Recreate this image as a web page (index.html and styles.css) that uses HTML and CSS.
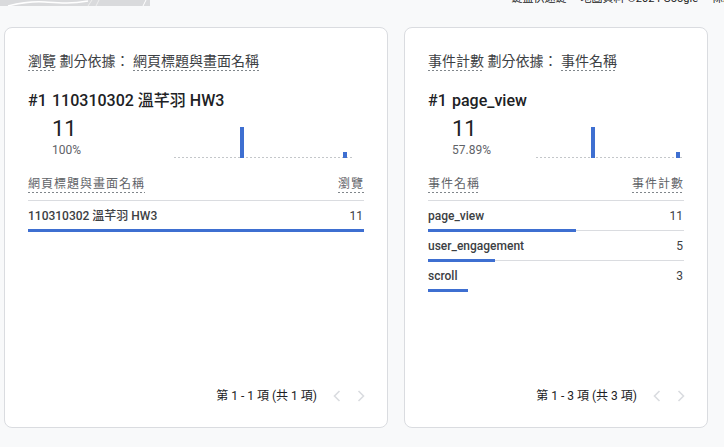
FILE: index.html
```html
<!DOCTYPE html>
<html lang="zh-Hant">
<head>
<meta charset="utf-8">
<title>報表</title>
<link rel="stylesheet" href="styles.css">
</head>
<body>
<div class="topbar">
  <div class="map">
    <svg width="150" height="6" viewBox="0 0 150 6" aria-hidden="true">
      <path d="M8 6 C20 3 30 1 45 2 S70 4 88 1" stroke="#fff" stroke-width="1.4" fill="none"/>
      <path d="M88 6 L92 0" stroke="#eee" stroke-width="1" fill="none"/>
      <path d="M96 6 L99 0" stroke="#eee" stroke-width="1" fill="none"/>
      <path d="M143 6 L146 0" stroke="#fff" stroke-width="1" fill="none"/>
    </svg>
  </div>
  <div class="attrib"><span>鍵盤快速鍵</span><span>地圖資料 ©2024 Google</span><span>條款</span></div>
</div>
<main class="cards">
  <section class="card card--wide">
    <div class="title"><span class="dash">瀏覽</span> 劃分依據： <span class="dash">網頁標題與畫面名稱</span></div>
    <div class="top"><span class="rank">#1</span><span>110310302 溫芊羽 HW3</span></div>
    <div class="metric-row">
      <div class="metric">
        <div class="value">11</div>
        <div class="pct">100%</div>
      </div>
      <div class="chart chart--wide">
        <div class="bar bar--tall"></div>
        <div class="bar bar--short"></div>
      </div>
    </div>
    <div class="thead"><span class="dash">網頁標題與畫面名稱</span><span class="dash">瀏覽</span></div>
    <div class="row row--last">
      <div class="row-main"><span class="name">110310302 溫芊羽 HW3</span><span class="num">11</span></div>
      <div class="track"><div class="fill" style="width:100%"></div></div>
    </div>
    <div class="pager">
      <span>第 1 - 1 項 (共 1 項)</span>
      <svg class="chev" width="8" height="12" viewBox="0 0 8 12"><path d="M6.5 1 L1.5 6 L6.5 11" fill="none" stroke="#dadce0" stroke-width="1.6"/></svg>
      <svg class="chev" width="8" height="12" viewBox="0 0 8 12"><path d="M1.5 1 L6.5 6 L1.5 11" fill="none" stroke="#dadce0" stroke-width="1.6"/></svg>
    </div>
  </section>
  <section class="card card--narrow">
    <div class="title"><span class="dash">事件計數</span> 劃分依據： <span class="dash">事件名稱</span></div>
    <div class="top"><span class="rank">#1</span><span>page_view</span></div>
    <div class="metric-row">
      <div class="metric">
        <div class="value">11</div>
        <div class="pct">57.89%</div>
      </div>
      <div class="chart chart--narrow">
        <div class="bar bar--tall"></div>
        <div class="bar bar--short"></div>
      </div>
    </div>
    <div class="thead"><span class="dash">事件名稱</span><span class="dash">事件計數</span></div>
    <div class="row">
      <div class="row-main"><span class="name">page_view</span><span class="num">11</span></div>
      <div class="track"><div class="fill" style="width:57.9%"></div></div>
    </div>
    <div class="row">
      <div class="row-main"><span class="name">user_engagement</span><span class="num">5</span></div>
      <div class="track"><div class="fill" style="width:26.3%"></div></div>
    </div>
    <div class="row row--last">
      <div class="row-main"><span class="name">scroll</span><span class="num">3</span></div>
      <div class="track"><div class="fill" style="width:15.8%"></div></div>
    </div>
    <div class="pager">
      <span>第 1 - 3 項 (共 3 項)</span>
      <svg class="chev" width="8" height="12" viewBox="0 0 8 12"><path d="M6.5 1 L1.5 6 L6.5 11" fill="none" stroke="#dadce0" stroke-width="1.6"/></svg>
      <svg class="chev" width="8" height="12" viewBox="0 0 8 12"><path d="M1.5 1 L6.5 6 L1.5 11" fill="none" stroke="#dadce0" stroke-width="1.6"/></svg>
    </div>
  </section>
</main>
</body>
</html>
```

FILE: styles.css
```css
* { box-sizing: border-box; }
html, body {
  margin: 0;
  background: #f8f9fa;
  font-family: Roboto, "Noto Sans CJK TC", "Noto Sans", sans-serif;
  color: #202124;
}
.topbar {
  height: 27px;
  display: flex;
  justify-content: space-between;
  align-items: flex-start;
  overflow: hidden;
}
.map {
  width: 150px;
  height: 6px;
  background: #d9dadc;
  display: flex;
}
.attrib {
  display: flex;
  gap: 14px;
  font-size: 11px;
  line-height: 12px;
  margin-top: -7px;
  margin-right: -10px;
  color: #222;
  white-space: nowrap;
}
.cards {
  display: flex;
  gap: 16px;
  padding-left: 4px;
}
.card {
  height: 401px;
  background: #fff;
  border: 1px solid #dadce0;
  border-radius: 8px;
  padding: 25px 23px 23px;
  display: flex;
  flex-direction: column;
}
.card--wide { width: 384px; }
.card--narrow { width: 304px; }
.dash {
  display: inline-block;
  padding-bottom: 1px;
  background: linear-gradient(to right, #80868b 55%, transparent 55%) left bottom / 4px 1px repeat-x;
}
.title {
  font-size: 14px;
  line-height: 17px;
  color: #3c4043;
  white-space: nowrap;
}
.top {
  margin-top: 20px;
  display: flex;
  font-size: 16px;
  line-height: 20px;
  font-weight: 500;
  color: #202124;
}
.rank { width: 24px; flex: none; }
.metric-row {
  margin-top: 5px;
  display: flex;
  align-items: flex-end;
  padding-left: 24px;
}
.metric { flex: 1; }
.value {
  font-size: 22px;
  line-height: 26px;
  color: #202124;
}
.pct {
  font-size: 12px;
  line-height: 16px;
  color: #5f6368;
}
.chart {
  height: 32px;
  display: flex;
  align-items: flex-end;
  background: linear-gradient(to right, #c4c7ca 60%, transparent 60%) left bottom / 4px 1px repeat-x;
}
.chart--wide { width: 178px; margin-right: 12px; }
.chart--narrow { width: 148px; }
.bar {
  width: 4px;
  background: #3e6fd1;
}
.bar--tall { height: 31px; margin-left: 37.1%; }
.bar--short { height: 6px; margin-left: auto; margin-right: 3%; }
.thead {
  margin-top: 18px;
  display: flex;
  justify-content: space-between;
  font-size: 12px;
  line-height: 16px;
  letter-spacing: 1px;
  color: #5f6368;
  padding-bottom: 7px;
  border-bottom: 1px solid #dadce0;
}
.row {
  padding-top: 7px;
}
.row-main {
  display: flex;
  justify-content: space-between;
  font-size: 12px;
  line-height: 16px;
  color: #3c4043;
}
.name { font-weight: 500; }
.num { padding-right: 1px; }
.track {
  display: flow-root;
  margin-top: 6px;
  height: 1px;
  background: #dadce0;
}
.row--last .track { background: transparent; }
.fill {
  height: 3px;
  margin-top: -1px;
  background: #3e6fd1;
}
.pager {
  margin-top: auto;
  display: flex;
  justify-content: flex-end;
  align-items: center;
  font-size: 12px;
  line-height: 16px;
  color: #202124;
  margin-right: -1px;
}
.chev { margin-left: 16px; flex: none; }
```
